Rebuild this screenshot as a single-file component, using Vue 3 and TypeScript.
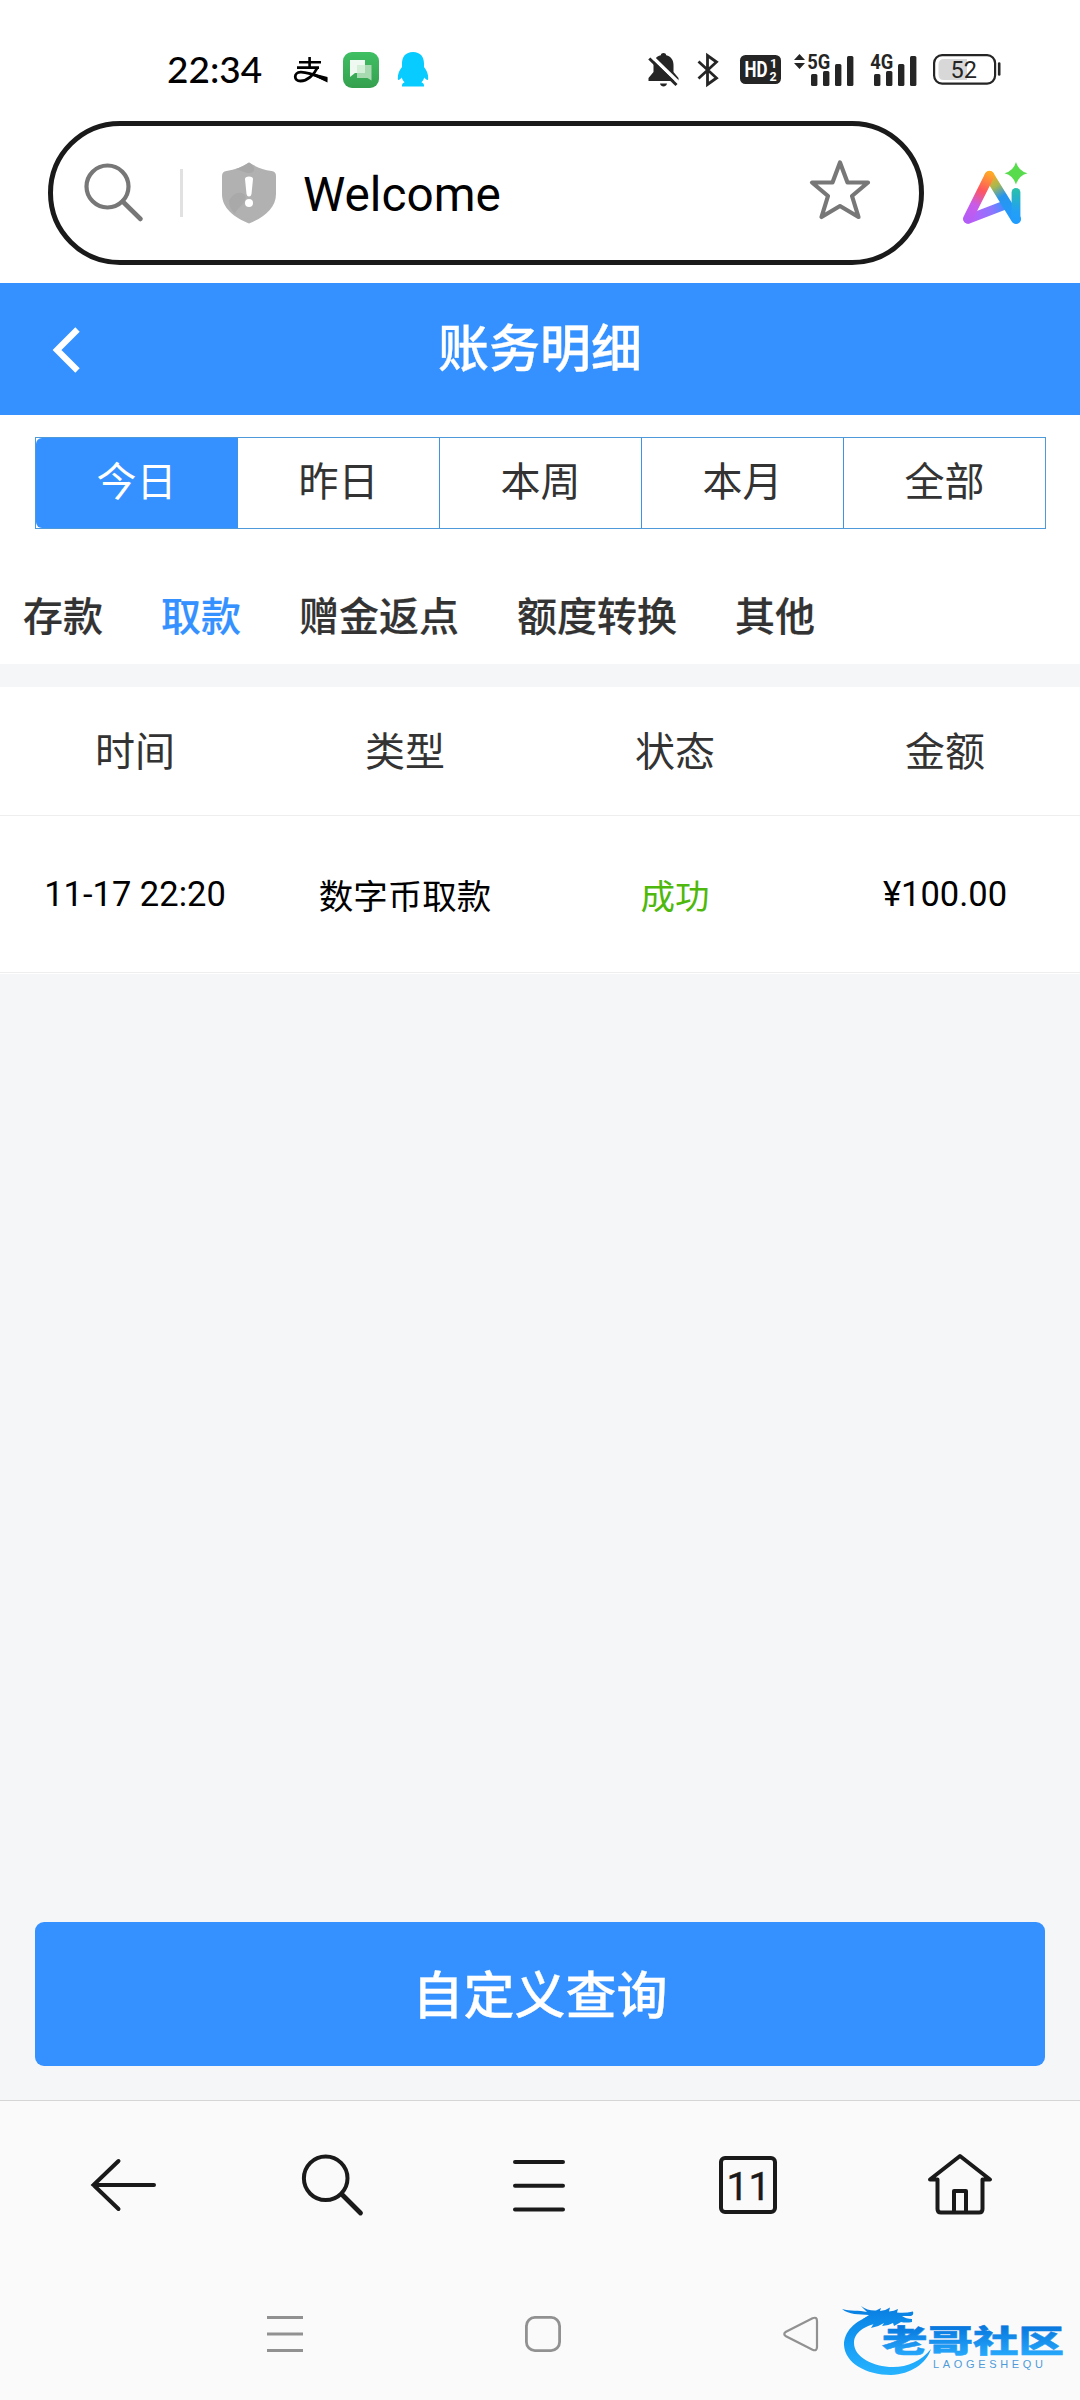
<template>
  <div class="screen">
    <!-- System status bar -->
    <header class="status-bar">
      <div class="status-left">
        <span class="clock">22:34</span>
        <svg class="pay-icon" width="34" height="26" viewBox="0 0 34 26" fill="none" stroke="#000">
          <path d="M5 5.2H27M15.6 0V10.5M3 10.6H25" stroke-width="2.6" />
          <path d="M23.5 10.5C20 18 13 24 6.5 24C-0.5 24 -0.5 15.5 6.5 15.2C14 14.8 23 19 33 23" stroke-width="2.8" />
          <path d="M20 16.6L33.5 20V25.4L19 18.5Z" fill="#000" stroke="none" />
        </svg>
        <svg class="chat-icon" width="36" height="36" viewBox="0 0 36 36">
          <defs>
            <linearGradient id="chatBg" x1="0" y1="0" x2="0" y2="1">
              <stop offset="0" stop-color="#3fbf63" />
              <stop offset="1" stop-color="#35a04f" />
            </linearGradient>
          </defs>
          <rect width="36" height="36" rx="9" fill="url(#chatBg)" />
          <path d="M14 13H28.5V28.5L24.5 26H14Z" fill="#a8dab2" />
          <path d="M7 8H22V21H12L7 25Z" fill="#fff" fill-opacity=".92" />
          <path d="M14 13H22V21H14Z" fill="#d3efd8" />
        </svg>
        <svg class="penguin-icon" width="32" height="35" viewBox="0 0 32 35">
          <path
            d="M16 0C8.5 0 5 5 5 11.5V15C2.5 18 .5 22 .8 27C1 29 3 27.5 4.8 25.5C5.4 27.5 6.2 29 7.6 30.2C5.5 31 4.8 32 5 34.5H27C27.2 32 26.5 31 24.4 30.2C25.8 29 26.6 27.5 27.2 25.5C29 27.5 31 29 31.2 27C31.5 22 29.5 18 27 15V11.5C27 5 23.5 0 16 0Z"
            fill="#08cbff"
          />
        </svg>
      </div>

      <div class="status-right">
        <svg class="bell-icon" width="31" height="34" viewBox="0 0 31 34">
          <path
            d="M15.5 0C17 0 18 .8 18.2 2.3C23 3.5 25.5 7 25.5 12V19L30.5 25V28H.5V25L5.5 19V12C5.5 7 8 3.5 12.8 2.3C13 .8 14 0 15.5 0Z"
            fill="#252525"
          />
          <path d="M12 30.5H19C18.5 32.8 17 33.5 15.5 33.5C14 33.5 12.5 32.8 12 30.5Z" fill="#252525" />
          <path d="M3.5 3.2L31 30" stroke="#fff" stroke-width="3.6" />
          <path d="M1.3 5.5L28.5 32" stroke="#252525" stroke-width="3" />
        </svg>
        <svg class="bluetooth-icon" width="22" height="34" viewBox="0 0 22 34" fill="none" stroke="#252525" stroke-width="2.8">
          <path d="M1.5 8.5L19.5 25L10.5 31.5V2.5L19.5 9L1.5 25.5" />
        </svg>
        <svg class="hd-icon" width="41" height="29" viewBox="0 0 41 29" fill="#fff">
          <rect width="41" height="29" rx="5.5" fill="#252525" />
          <text x="4.5" y="22" class="badge-text" font-size="21.5" textLength="23" lengthAdjust="spacingAndGlyphs">HD</text>
          <text x="30" y="13" class="badge-text" font-size="12.5">1</text>
          <text x="29.5" y="25.8" class="badge-text" font-size="12.5">2</text>
        </svg>
        <svg
          v-for="signal in signals"
          :key="signal.label"
          :class="['signal-icon', signal.className]"
          width="61"
          height="40"
          viewBox="0 -4 61 40"
          fill="#252525"
        >
          <path v-if="signal.arrows" d="M0 6L5.5 0L11 6ZM0 9H11L5.5 15Z" />
          <text x="13.2" y="15" class="badge-text" font-size="20.5" textLength="23" lengthAdjust="spacingAndGlyphs">{{ signal.label }}</text>
          <rect v-for="bar in signalBars" :key="bar.x" :x="bar.x" :y="bar.y" width="6.4" :height="32 - bar.y" rx="1.5" />
        </svg>
        <svg class="battery-icon" width="68" height="31" viewBox="0 0 68 31">
          <path d="M11 5H34V26H11Q5.5 26 5.5 20.5V10.5Q5.5 5 11 5Z" fill="#d8d8d8" />
          <rect x="1.1" y="1.1" width="61" height="28.5" rx="8" fill="none" stroke="#252525" stroke-width="2.2" />
          <path d="M66.2 9.5V20.5" stroke="#252525" stroke-width="2.6" stroke-linecap="round" />
          <text x="17.5" y="23.6" class="battery-text">52</text>
        </svg>
      </div>
    </header>

    <!-- Address bar -->
    <div class="browser-bar">
      <div class="address">
        <svg class="address-search" width="60" height="60" viewBox="0 0 60 60" fill="none" stroke="#777" stroke-width="4.2">
          <circle cx="23.5" cy="23.5" r="21" />
          <path d="M38.7 38.5L56.5 56" stroke-width="4.6" stroke-linecap="round" />
        </svg>
        <span class="address-divider"></span>
        <svg class="shield-icon" width="54" height="62" viewBox="0 0 54 62">
          <path
            d="M27 .5C34 5 41 7.5 49.5 9C52.5 9.6 54 11 54 14V32C54 46 42 55.5 27 61.5C12 55.5 0 46 0 32V14C0 11 1.5 9.6 4.5 9C13 7.5 20 5 27 .5Z"
            fill="#b1b1b1"
          />
          <path d="M27 .5C31 3 34 7 31 10C27 13 20 9 14 7C19 5.5 23 3.5 27 .5Z" fill="#a8a8a8" />
          <path d="M7 39C10 32 18 28 23 33C26 41 15 45 13 52C9 48 7 44 7 39Z" fill="#a9a9a9" />
          <path d="M23 17Q23 14.5 27 14.5Q31 14.5 31 17L29.5 32Q29 34.5 27 34.5Q25 34.5 24.5 32Z" fill="#fff" />
          <circle cx="27" cy="41" r="4" fill="#fff" />
        </svg>
        <span class="address-text">Welcome</span>
        <svg class="star-icon" width="62" height="60" viewBox="0 0 62 60">
          <path
            d="M31 2.5L38.5 22.5H59L43 36L49.5 57L31 46L12.5 57L19 36L3 22.5H23.5Z"
            fill="none"
            stroke="#777"
            stroke-width="4.2"
            stroke-linejoin="round"
          />
        </svg>
      </div>
      <svg class="ai-icon" width="65" height="63" viewBox="0 0 65 63" fill="none">
        <defs>
          <linearGradient id="aiLeft" gradientUnits="userSpaceOnUse" x1="26" y1="10" x2="5" y2="58">
            <stop offset="0" stop-color="#ffab25" />
            <stop offset=".38" stop-color="#fd5660" />
            <stop offset=".68" stop-color="#c95be8" />
            <stop offset="1" stop-color="#b35df7" />
          </linearGradient>
          <linearGradient id="aiBase" gradientUnits="userSpaceOnUse" x1="5" y1="58" x2="42" y2="43">
            <stop offset="0" stop-color="#c05af5" />
            <stop offset=".65" stop-color="#8c75ff" />
            <stop offset="1" stop-color="#3a91ff" />
          </linearGradient>
          <linearGradient id="aiRight" gradientUnits="userSpaceOnUse" x1="26" y1="13" x2="53" y2="58">
            <stop offset="0" stop-color="#ffab25" />
            <stop offset=".25" stop-color="#a7b850" />
            <stop offset=".48" stop-color="#2795ee" />
            <stop offset="1" stop-color="#209cff" />
          </linearGradient>
          <linearGradient id="aiStem" x1="0" y1="0" x2="0" y2="1">
            <stop offset="0" stop-color="#2ac1a7" />
            <stop offset=".65" stop-color="#22a0f5" />
            <stop offset="1" stop-color="#209cff" />
          </linearGradient>
        </defs>
        <path d="M5 57.2L42 43" stroke="url(#aiBase)" stroke-width="9" stroke-linecap="round" />
        <path d="M26.5 14L53 57" stroke="url(#aiRight)" stroke-width="10" stroke-linecap="round" />
        <path d="M26.5 13.5L4.8 56.8" stroke="url(#aiLeft)" stroke-width="9.6" stroke-linecap="round" />
        <rect x="48.6" y="26" width="8.8" height="35.6" rx="4.4" fill="url(#aiStem)" />
        <path d="M53 0Q55.5 9 64.5 11.2Q55.5 13.5 53 22.5Q50.5 13.5 41.5 11.2Q50.5 9 53 0Z" fill="#58db4d" />
      </svg>
    </div>

    <!-- Page content -->
    <main class="page">
      <div class="page-header">
        <svg class="back-icon" width="27" height="46" viewBox="0 0 27 46">
          <path d="M24.5 2.5L4 23L24.5 43.5" fill="none" stroke="#fff" stroke-width="6.2" />
        </svg>
        <h1 class="page-title">账务明细</h1>
      </div>

      <section class="filters">
        <div class="period-tabs">
          <button
            v-for="period in periods"
            :key="period"
            :class="['period-tab', { active: period === activePeriod }]"
            @click="activePeriod = period"
          >
            {{ period }}
          </button>
        </div>
        <nav class="type-tabs">
          <a
            v-for="item in types"
            :key="item"
            :class="['type-tab', { active: item === activeType }]"
            @click="activeType = item"
          >{{ item }}</a>
        </nav>
      </section>

      <section class="records">
        <div class="record-row record-head">
          <span v-for="column in columns" :key="column">{{ column }}</span>
        </div>
        <div v-for="record in records" :key="record.time" class="record-row record-item">
          <span>{{ record.time }}</span>
          <span>{{ record.type }}</span>
          <span class="success">{{ record.status }}</span>
          <span>{{ record.amount }}</span>
        </div>
      </section>

      <button class="query-button">自定义查询</button>
    </main>

    <!-- Browser toolbar and system navigation -->
    <footer class="bottom">
      <div class="toolbar">
        <span class="tool">
          <svg width="66" height="62" viewBox="0 0 66 62">
            <path d="M28.5 7L3.5 31L28.5 55M3.5 31H64" />
          </svg>
        </span>
        <span class="tool">
          <svg width="62" height="62" viewBox="0 0 62 62">
            <circle cx="24.7" cy="24.3" r="21.8" />
            <path d="M41.5 41L59.5 59" stroke-width="4.8" />
          </svg>
        </span>
        <span class="tool">
          <svg width="54" height="62" viewBox="0 0 54 62">
            <path d="M2 8H50M2 31.8H50M2 55.5H50" />
          </svg>
        </span>
        <span class="tool tabs-tool"><span class="tab-count">11</span></span>
        <span class="tool">
          <svg width="66" height="64" viewBox="0 0 66 64">
            <path
              d="M11.5 26.5H4L34 3L64 26.5H56.5V56Q56.5 59.5 53 59.5H15Q11.5 59.5 11.5 56ZM28 58V38H40V58"
              stroke-linejoin="round"
            />
          </svg>
        </span>
      </div>

      <div class="system-nav">
        <svg width="36" height="36" viewBox="0 0 36 36">
          <path d="M0 1.5H36M0 18H36M0 34.5H36" />
        </svg>
        <svg width="36" height="36" viewBox="0 0 36 36">
          <rect x="1.4" y="1.4" width="33.2" height="33.2" rx="8.5" />
        </svg>
        <svg class="nav-back" width="36" height="36" viewBox="0 0 36 36">
          <path d="M3 15.8L29.5 2.2Q34 .5 34 5V31Q34 35.5 29.5 33.8L3 20.2Q-.5 18 3 15.8Z" />
        </svg>
      </div>
    </footer>

    <svg class="watermark" width="224" height="76" viewBox="0 0 224 76">
      <defs>
        <linearGradient id="dragonFill" gradientUnits="userSpaceOnUse" x1="0" y1="4" x2="0" y2="74">
          <stop offset="0" stop-color="#087de0" />
          <stop offset=".5" stop-color="#159bf5" />
          <stop offset="1" stop-color="#28b4ff" />
        </linearGradient>
        <linearGradient id="nameFill" x1="0" y1="0" x2="0" y2="1">
          <stop offset=".25" stop-color="#0878de" />
          <stop offset=".9" stop-color="#27a9fc" />
        </linearGradient>
      </defs>
      <g fill="url(#dragonFill)">
        <path d="M30 13C12 19 2 30 2 43C3 61 24 73 49 73C69 72 84 62 89 47C79 59 66 65 51 65C31 65 12 55 12 41C12 30 23 24 36 21Z" />
        <path d="M0 7C8 9.5 17 8 25 10L19 4Q26 9 34 8.5L39 6L38 9Q43 9 48 5.5L47 9.5Q52 9 56 7L55 10.5Q63 11.5 71 9.5Q72 13 69 14H60Q64 17 70 17V20Q64 21 59 20L52 24L51 21Q46 24 40 24L42 21Q36 25 29 26L32 21L25 23L30 17L21 17L27 13C17 12 7 13 0 7Z" />
      </g>
      <text x="40" y="49.5" class="wm-name" textLength="182" lengthAdjust="spacingAndGlyphs">老哥社区</text>
      <text x="91" y="66" class="wm-latin" textLength="110">LAOGESHEQU</text>
    </svg>
  </div>
</template>

<script setup lang="ts">
import { ref } from 'vue'

interface BillRecord {
  time: string
  type: string
  status: string
  amount: string
}

interface Signal {
  label: string
  className: string
  arrows: boolean
}

const periods = ['今日', '昨日', '本周', '本月', '全部']
const types = ['存款', '取款', '赠金返点', '额度转换', '其他']
const columns = ['时间', '类型', '状态', '金额']

const activePeriod = ref('今日')
const activeType = ref('取款')

const records = ref<BillRecord[]>([
  { time: '11-17 22:20', type: '数字币取款', status: '成功', amount: '¥100.00' }
])

const signals: Signal[] = [
  { label: '5G', className: 'signal-main', arrows: true },
  { label: '4G', className: 'signal-second', arrows: false }
]

const signalBars = [
  { x: 17, y: 20 },
  { x: 29, y: 17 },
  { x: 41, y: 10 },
  { x: 53, y: 2 }
]
</script>

<style>
body {
  margin: 0;
  background: #fff;
}
</style>

<style scoped>
.screen {
  position: relative;
  display: flex;
  flex-direction: column;
  width: 1080px;
  height: 2400px;
  overflow: hidden;
  background: #fff;
  font-family: Roboto, 'Noto Sans CJK SC', sans-serif;
}

svg {
  display: block;
  flex: none;
  overflow: visible;
}

button {
  margin: 0;
  padding: 0;
  border: 0;
  background: none;
  font-family: inherit;
}

/* Status bar */
.status-bar {
  display: flex;
  justify-content: space-between;
  box-sizing: border-box;
  height: 121px;
  padding: 52px 79px 0 167px;
}

.status-left,
.status-right {
  display: flex;
  align-items: center;
  height: 35px;
}

.clock {
  width: 127px;
  padding-bottom: 2px;
  color: #000;
  font-family: Lato, sans-serif;
  font-size: 37px;
  font-weight: 500;
  line-height: 35px;
}

.chat-icon {
  margin-left: 15px;
}

.penguin-icon {
  margin-left: 18px;
}

.bluetooth-icon {
  margin-left: 18px;
}

.hd-icon {
  margin-left: 21px;
}

.signal-main {
  margin-left: 13px;
}

.signal-second {
  margin-left: 2px;
}

.battery-icon {
  margin-left: 15px;
}

.badge-text {
  font-family: Roboto, sans-serif;
  font-weight: 700;
}

.battery-text {
  fill: #252525;
  font-family: Roboto, sans-serif;
  font-size: 23.5px;
}

/* Address bar */
.browser-bar {
  display: flex;
  align-items: flex-start;
  height: 162px;
  padding-left: 48px;
}

.address {
  display: flex;
  align-items: center;
  box-sizing: border-box;
  width: 876px;
  height: 144px;
  padding: 0 48px 0 31px;
  border: 5px solid #1a1a1a;
  border-radius: 72px;
}

.address-divider {
  width: 3px;
  height: 48px;
  margin-left: 36px;
  background: #e1e1e1;
}

.shield-icon {
  margin-left: 39px;
}

.address-text {
  flex: 1;
  margin-left: 27px;
  padding-top: 3px;
  color: #000;
  font-size: 47.7px;
  line-height: 60px;
}

.star-icon {
  margin-bottom: 6px;
}

.ai-icon {
  margin: 41px 0 0 39px;
}

/* Page */
.page {
  display: flex;
  flex-direction: column;
  height: 1817px;
  background: #f4f6f8;
}

.page-header {
  display: grid;
  grid-template-columns: 1fr auto 1fr;
  align-items: center;
  box-sizing: border-box;
  height: 132px;
  padding-top: 2px;
  background: #3491ff;
}

.back-icon {
  margin-left: 53px;
}

.page-title {
  margin: 0;
  color: #fff;
  font-size: 51px;
  font-weight: 500;
  line-height: 70px;
  -webkit-text-stroke: 0.3px #fff;
}

.filters {
  box-sizing: border-box;
  height: 249px;
  padding-top: 22px;
  background: #fff;
}

.period-tabs {
  display: flex;
  box-sizing: border-box;
  height: 92px;
  margin: 0 34px 0 35px;
  border: 1px solid #4d99d9;
}

.period-tab {
  flex: 1 1 0;
  box-sizing: border-box;
  width: 0;
  color: #333;
  font-size: 40px;
  line-height: 88px;
}

.period-tab + .period-tab {
  border-left: 1px solid #3f93e6;
}

.period-tab.active {
  border-radius: 6px 0 0 6px;
  background: #3491ff;
  color: #fff;
}

.type-tabs {
  display: flex;
  gap: 58px;
  padding: 59px 23px 0;
}

.type-tab {
  color: #333;
  font-size: 40px;
  font-weight: 500;
  line-height: 60px;
  -webkit-text-stroke: 0.2px currentColor;
}

.type-tab.active {
  color: #3491ff;
}

.records {
  margin-top: 23px;
  padding-bottom: 1px;
  background: #fff;
}

.record-row {
  display: grid;
  grid-template-columns: repeat(4, 1fr);
  align-items: center;
  box-sizing: border-box;
  border-bottom: 1px solid #eee;
  text-align: center;
}

.record-head {
  height: 129px;
  padding-bottom: 4px;
  color: #333;
  font-size: 40px;
}

.record-item {
  height: 157px;
  padding-bottom: 1px;
  color: #000;
  font-size: 34.5px;
}

.success {
  color: #4fb80c;
}

.query-button {
  height: 144px;
  margin: auto 35px 34px;
  padding-bottom: 5px;
  border-radius: 9px;
  background: #3491ff;
  color: #fff;
  font-size: 51px;
  font-weight: 500;
  -webkit-text-stroke: 0.3px #fff;
}

/* Bottom bars */
.bottom {
  flex: 1;
  box-sizing: border-box;
  border-top: 1px solid #d5d5d5;
  background: #fafafa;
}

.toolbar {
  display: flex;
  height: 168px;
  padding: 0 17px 0 19px;
}

.tool {
  display: flex;
  flex: 1 1 0;
  box-sizing: border-box;
  align-items: center;
  justify-content: center;
  width: 0;
}

.tool svg {
  fill: none;
  stroke: #1a1a1a;
  stroke-width: 4;
  stroke-linecap: round;
}

.tabs-tool {
  padding-right: 2px;
}

.tab-count {
  box-sizing: border-box;
  width: 58px;
  height: 58px;
  border: 4px solid #1a1a1a;
  border-radius: 6px;
  color: #1a1a1a;
  font-size: 39px;
  font-weight: 400;
  line-height: 54px;
  text-align: center;
  -webkit-text-stroke: 0.4px #1a1a1a;
}

.system-nav {
  display: flex;
  justify-content: space-between;
  padding: 47px 261px 0 267px;
}

.system-nav svg {
  fill: none;
  stroke: #919191;
  stroke-width: 2.8;
}

.system-nav .nav-back {
  stroke-width: 2.2;
}

.watermark {
  position: absolute;
  right: 14px;
  bottom: 22px;
}

.wm-name {
  fill: url(#nameFill);
  stroke: url(#nameFill);
  stroke-width: 0.5px;
  font-family: 'Noto Sans CJK SC', sans-serif;
  font-size: 31px;
  font-weight: 900;
}

.wm-latin {
  fill: #4f9bd9;
  font-family: 'Liberation Sans', sans-serif;
  font-size: 11px;
}
</style>
